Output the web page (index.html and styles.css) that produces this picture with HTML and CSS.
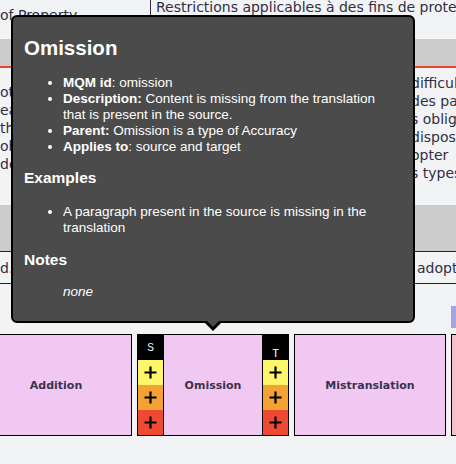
FILE: index.html
```html
<!DOCTYPE html>
<html lang="en">
<head>
<meta charset="utf-8">
<title>Omission</title>
<link rel="stylesheet" href="styles.css">
</head>
<body>
<div class="page">
  <div class="top-row">
    <div class="cell-left top-left">of Property</div>
    <div class="cell-right top-right">Restrictions applicables à des fins de protection</div>
  </div>
  <div class="head-band"></div>
  <div class="body-row">
    <div class="cell-left lines">
      <div>other</div>
      <div>each</div>
      <div>the</div>
      <div>ohne</div>
      <div>ddl</div>
    </div>
    <div class="cell-right lines right-lines">
      <div>difficulté</div>
      <div>des parties</div>
      <div>s obligations</div>
      <div>dispositions</div>
      <div>opter</div>
      <div>s types</div>
    </div>
  </div>
  <div class="band2"></div>
  <div class="row3">
    <div class="cell-left">d.</div>
    <div class="cell-right row3-right">adopter</div>
  </div>
  <div class="legend-row"><div class="legend-chip"></div></div>
  <div class="boxes">
    <div class="box"><span class="label">Addition</span></div>
    <div class="box group">
      <div class="side">
        <div class="tag tag-s">S</div>
        <div class="sev yellow"><svg viewBox="0 0 13 13" width="13" height="13"><path d="M6.5 0.5v12M0.5 6.5h12" stroke="#000" stroke-width="2.2" fill="none"/></svg></div>
        <div class="sev orange"><svg viewBox="0 0 13 13" width="13" height="13"><path d="M6.5 0.5v12M0.5 6.5h12" stroke="#000" stroke-width="2.2" fill="none"/></svg></div>
        <div class="sev red"><svg viewBox="0 0 13 13" width="13" height="13"><path d="M6.5 0.5v12M0.5 6.5h12" stroke="#000" stroke-width="2.2" fill="none"/></svg></div>
      </div>
      <div class="center"><span class="label">Omission</span></div>
      <div class="side">
        <div class="tag tag-t">T</div>
        <div class="sev yellow"><svg viewBox="0 0 13 13" width="13" height="13"><path d="M6.5 0.5v12M0.5 6.5h12" stroke="#000" stroke-width="2.2" fill="none"/></svg></div>
        <div class="sev orange"><svg viewBox="0 0 13 13" width="13" height="13"><path d="M6.5 0.5v12M0.5 6.5h12" stroke="#000" stroke-width="2.2" fill="none"/></svg></div>
        <div class="sev red"><svg viewBox="0 0 13 13" width="13" height="13"><path d="M6.5 0.5v12M0.5 6.5h12" stroke="#000" stroke-width="2.2" fill="none"/></svg></div>
      </div>
    </div>
    <div class="box"><span class="label">Mistranslation</span></div>
    <div class="box next"></div>
  </div>

  <div class="tooltip">
    <h2 class="tt-title">Omission</h2>
    <ul class="tt-list first">
      <li><b>MQM id</b>: omission</li>
      <li><b>Description:</b> Content is missing from the translation that is present in the source.</li>
      <li><b>Parent:</b> Omission is a type of Accuracy</li>
      <li><b>Applies to</b>: source and target</li>
    </ul>
    <h3 class="tt-sub">Examples</h3>
    <ul class="tt-list second">
      <li>A paragraph present in the source is missing in the translation</li>
    </ul>
    <h3 class="tt-sub">Notes</h3>
    <p class="tt-none">none</p>
  </div>
</div>
</body>
</html>
```

FILE: styles.css
```css
html, body {
  margin: 0;
  padding: 0;
}
body {
  background: #f2f3f5;
  font-family: "DejaVu Sans", Verdana, sans-serif;
  font-size: 14px;
  color: #2f2f45;
  overflow: hidden;
}
.page {
  position: relative;
  width: 456px;
  height: 464px;
  overflow: hidden;
}
.top-row {
  display: flex;
  height: 39px;
  align-items: flex-start;
}
.cell-left {
  width: 150px;
  flex: none;
  white-space: nowrap;
  overflow: hidden;
}
.cell-right {
  flex: 1;
  white-space: nowrap;
  overflow: hidden;
}
.top-left {
  line-height: 18px;
  padding-top: 6px;
}
.top-right {
  border-left: 1px solid #333;
  height: 39px;
  box-sizing: border-box;
  padding-left: 5px;
  line-height: 14px;
}
.head-band {
  height: 27px;
  background: #cccccc;
  border-bottom: 2px solid #e8432c;
}
.body-row {
  display: flex;
  align-items: center;
  padding: 6px 0 23px;
  height: 108px;
}
.lines {
  line-height: 18px;
}
.right-lines {
  padding-left: 261px;
}
.band2 {
  height: 46px;
  background: #cccccc;
  border-bottom: 1px solid #222;
}
.row3 {
  display: flex;
  height: 32px;
  box-sizing: border-box;
  padding-top: 7px;
  line-height: 18px;
  border-bottom: 1px solid #222;
}
.row3-right {
  padding-left: 267px;
}
.legend-row {
  display: flex;
  padding-left: 451px;
  margin-top: 22px;
  height: 22px;
}
.legend-chip {
  width: 20px;
  background: #a0a7e3;
  flex: none;
}
.boxes {
  display: flex;
  gap: 5px;
  margin-top: 6px;
  margin-left: -20px;
  height: 102px;
}
.box {
  flex: none;
  width: 152px;
  height: 102px;
  box-sizing: border-box;
  border: 1px solid #000;
  background: #f0c8f2;
  display: flex;
  align-items: center;
  justify-content: center;
}
.box.next {
  background: #f5c2ca;
}
.label {
  font-family: "DejaVu Sans", Verdana, sans-serif;
  font-weight: bold;
  font-size: 11px;
  color: #3a3350;
}
.group {
  align-items: stretch;
  justify-content: flex-start;
}
.side {
  width: 25px;
  flex: none;
  display: flex;
  flex-direction: column;
}
.center {
  flex: 1;
  border-left: 1px solid #000;
  border-right: 1px solid #000;
  display: flex;
  align-items: center;
  justify-content: center;
}
.tag {
  height: 25px;
  background: #000;
  color: #fff;
  font-family: "Liberation Sans", Arial, sans-serif;
  font-size: 10px;
  text-align: center;
  box-sizing: border-box;
  line-height: 10px;
}
.tag-s {
  padding-top: 8px;
}
.tag-t {
  padding-top: 13px;
  font-size: 11px;
}
.sev {
  height: 25px;
  display: flex;
  align-items: center;
  justify-content: center;
}
.sev svg {
  display: block;
}
.yellow { background: #fdf56a; }
.orange { background: #f4a234; }
.red { background: #ee4a33; }

.tooltip {
  position: absolute;
  left: 11px;
  top: 15px;
  width: 404px;
  height: 308px;
  box-sizing: border-box;
  background: #4b4b4b;
  border: 2px solid #000;
  border-radius: 6px;
  padding: 19px 12px 0 11px;
  color: #fff;
  font-family: "Liberation Sans", Arial, Helvetica, sans-serif;
  font-size: 13.5px;
}
.tooltip::before {
  content: "";
  position: absolute;
  left: 50%;
  margin-left: -10px;
  bottom: -10px;
  border-left: 10px solid transparent;
  border-right: 10px solid transparent;
  border-top: 10px solid #000;
}
.tooltip::after {
  content: "";
  position: absolute;
  left: 50%;
  margin-left: -7px;
  bottom: -6px;
  border-left: 7px solid transparent;
  border-right: 7px solid transparent;
  border-top: 7px solid #4b4b4b;
}
.tt-title {
  margin: 0;
  font-size: 20.5px;
  line-height: 24px;
  font-weight: bold;
}
.tt-list {
  margin: 0;
  padding-left: 39px;
  line-height: 16px;
}
.tt-list.first {
  margin-top: 15px;
}
.tt-list.second {
  margin-top: 17px;
}
.tt-sub {
  margin: 14px 0 0;
  font-size: 15.5px;
  line-height: 18px;
  font-weight: bold;
}
.tt-sub + .tt-none {
  margin-top: 15px;
}
.tt-list.second + .tt-sub {
  margin-top: 15px;
}
.tt-none {
  margin: 0;
  padding-left: 39px;
  font-style: italic;
  line-height: 16px;
}
```
